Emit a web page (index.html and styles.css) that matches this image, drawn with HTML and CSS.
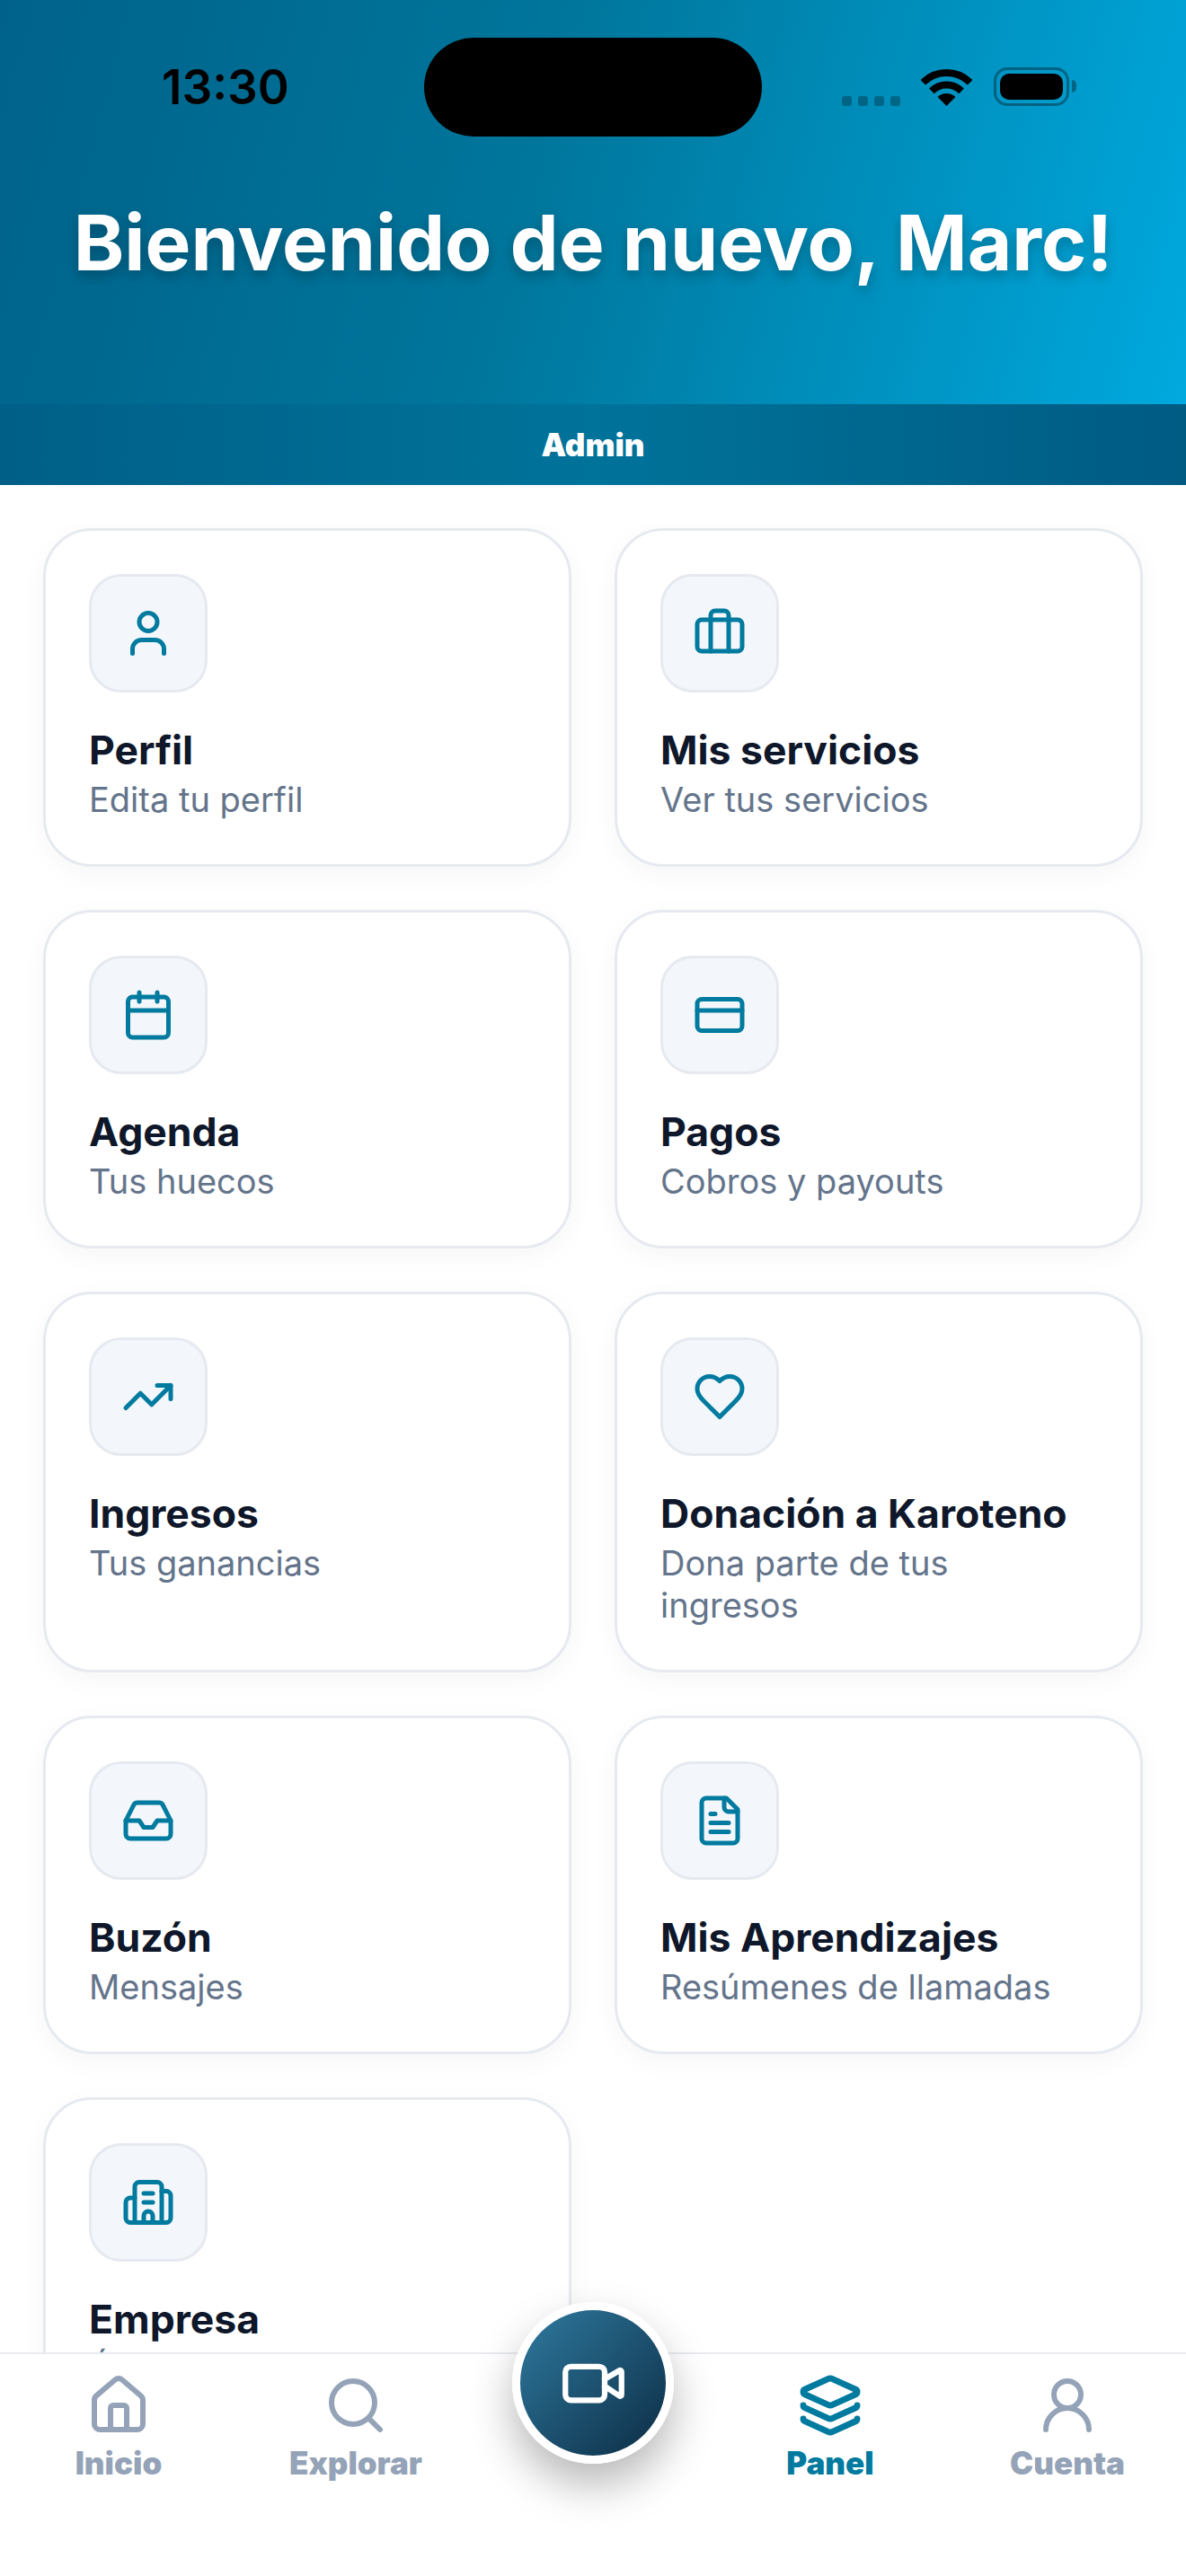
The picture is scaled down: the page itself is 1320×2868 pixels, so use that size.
FILE: index.html
```html
<!DOCTYPE html>
<html lang="es">
<head>
    <meta charset="UTF-8">
    <meta name="viewport" content="width=device-width, initial-scale=1.0">
    <title>Panel</title>
    <link rel="stylesheet" href="styles.css">
</head>
<body>
    <div class="screen">
        <header class="hero">
            <div class="status-bar">
                <span class="time">13:30</span>
                <div class="island"></div>
                <div class="status-icons">
                    <div class="signal"><i></i><i></i><i></i><i></i></div>
                    <svg class="wifi" viewBox="0 0 57 42" width="57" height="42">
                        <path d="M2.3 15.8A37 37 0 0 1 54.7 15.8" fill="none" stroke="#000" stroke-width="8"/>
                        <path d="M11.9 25.4A23.5 23.5 0 0 1 45.1 25.4" fill="none" stroke="#000" stroke-width="8"/>
                        <path d="M28.5 42L18.6 32.1A14 14 0 0 1 38.4 32.1Z" fill="#000"/>
                    </svg>
                    <div class="battery"><div class="battery-fill"></div></div>
                    <div class="battery-cap"></div>
                </div>
            </div>
            <h1>Bienvenido de nuevo, Marc!</h1>
        </header>
        <div class="role-bar">Admin</div>

        <main class="grid">
            <a class="card">
                <div class="card-icon">
                    <svg viewBox="0 0 24 24"><path d="M19 21v-2a4 4 0 0 0-4-4H9a4 4 0 0 0-4 4v2"/><circle cx="12" cy="7" r="4"/></svg>
                </div>
                <h3>Perfil</h3>
                <p>Edita tu perfil</p>
            </a>
            <a class="card">
                <div class="card-icon">
                    <svg viewBox="0 0 24 24"><path d="M16 20V4a2 2 0 0 0-2-2h-4a2 2 0 0 0-2 2v16"/><rect width="20" height="14" x="2" y="6" rx="2"/></svg>
                </div>
                <h3>Mis servicios</h3>
                <p>Ver tus servicios</p>
            </a>
            <a class="card">
                <div class="card-icon">
                    <svg viewBox="0 0 24 24"><path d="M8 2v4"/><path d="M16 2v4"/><rect width="18" height="18" x="3" y="4" rx="2"/><path d="M3 10h18"/></svg>
                </div>
                <h3>Agenda</h3>
                <p>Tus huecos</p>
            </a>
            <a class="card">
                <div class="card-icon">
                    <svg viewBox="0 0 24 24"><rect width="20" height="14" x="2" y="5" rx="2"/><path d="M2 10h20"/></svg>
                </div>
                <h3>Pagos</h3>
                <p>Cobros y payouts</p>
            </a>
            <a class="card">
                <div class="card-icon">
                    <svg viewBox="0 0 24 24"><path d="M16 7h6v6"/><path d="m22 7-8.5 8.5-5-5L2 17"/></svg>
                </div>
                <h3>Ingresos</h3>
                <p>Tus ganancias</p>
            </a>
            <a class="card">
                <div class="card-icon">
                    <svg viewBox="0 0 24 24"><path d="M19 14c1.49-1.46 3-3.21 3-5.5A5.5 5.5 0 0 0 16.5 3c-1.76 0-3 .5-4.5 2-1.5-1.5-2.74-2-4.5-2A5.5 5.5 0 0 0 2 8.5c0 2.3 1.5 4.05 3 5.5l7 7Z"/></svg>
                </div>
                <h3>Donación a Karoteno</h3>
                <p>Dona parte de tus ingresos</p>
            </a>
            <a class="card">
                <div class="card-icon">
                    <svg viewBox="0 0 24 24"><path d="M22 12h-6l-2 3h-4l-2-3H2"/><path d="M5.45 5.11 2 12v6a2 2 0 0 0 2 2h16a2 2 0 0 0 2-2v-6l-3.45-6.89A2 2 0 0 0 16.76 4H7.24a2 2 0 0 0-1.79 1.11z"/></svg>
                </div>
                <h3>Buzón</h3>
                <p>Mensajes</p>
            </a>
            <a class="card">
                <div class="card-icon">
                    <svg viewBox="0 0 24 24"><path d="M15 2H6a2 2 0 0 0-2 2v16a2 2 0 0 0 2 2h12a2 2 0 0 0 2-2V7Z"/><path d="M14 2v4a2 2 0 0 0 2 2h4"/><path d="M10 9H8"/><path d="M16 13H8"/><path d="M16 17H8"/></svg>
                </div>
                <h3>Mis Aprendizajes</h3>
                <p>Resúmenes de llamadas</p>
            </a>
            <a class="card">
                <div class="card-icon">
                    <svg viewBox="0 0 24 24"><path d="M10 12h4"/><path d="M10 8h4"/><path d="M14 21v-3a2 2 0 0 0-4 0v3"/><path d="M6 10H4a2 2 0 0 0-2 2v7a2 2 0 0 0 2 2h16a2 2 0 0 0 2-2V9a2 2 0 0 0-2-2h-2"/><path d="M6 21V5a2 2 0 0 1 2-2h8a2 2 0 0 1 2 2v16"/></svg>
                </div>
                <h3>Empresa</h3>
                <p>Área de empresa</p>
            </a>
        </main>

        <nav class="tab-bar">
            <a class="tab">
                <svg viewBox="0 0 24 24"><path d="M15 21v-8a1 1 0 0 0-1-1h-4a1 1 0 0 0-1 1v8"/><path d="M3 10a2 2 0 0 1 .709-1.528l7-5.999a2 2 0 0 1 2.582 0l7 5.999A2 2 0 0 1 21 10v9a2 2 0 0 1-2 2H5a2 2 0 0 1-2-2z"/></svg>
                <span>Inicio</span>
            </a>
            <a class="tab">
                <svg viewBox="0 0 24 24"><circle cx="11" cy="11" r="8"/><path d="m21 21-4.3-4.3"/></svg>
                <span>Explorar</span>
            </a>
            <div class="tab-spacer"></div>
            <a class="tab active">
                <svg viewBox="0 0 24 24"><path d="M12.83 2.18a2 2 0 0 0-1.66 0L2.6 6.08a1 1 0 0 0 0 1.83l8.58 3.91a2 2 0 0 0 1.66 0l8.58-3.9a1 1 0 0 0 0-1.83z"/><path d="M2 12a1 1 0 0 0 .58.91l8.6 3.91a2 2 0 0 0 1.65 0l8.58-3.9A1 1 0 0 0 22 12"/><path d="M2 17a1 1 0 0 0 .58.91l8.6 3.91a2 2 0 0 0 1.65 0l8.58-3.9A1 1 0 0 0 22 17"/></svg>
                <span>Panel</span>
            </a>
            <a class="tab">
                <svg viewBox="0 0 24 24"><circle cx="12" cy="8" r="5"/><path d="M20 21a8 8 0 0 0-16 0"/></svg>
                <span>Cuenta</span>
            </a>
            <button class="fab">
                <svg viewBox="0 0 24 24"><path d="m16 13 5.223 3.482a.5.5 0 0 0 .777-.416V7.87a.5.5 0 0 0-.752-.432L16 10.5"/><rect x="2" y="6" width="14" height="12" rx="2"/></svg>
            </button>
        </nav>
    </div>
</body>
</html>
```

FILE: styles.css
```css
body {
    margin: 0;
    background: #fff;
    font-family: Inter, "Liberation Sans", sans-serif;
}
svg {
    display: block;
}
.screen {
    width: 1320px;
    height: 2868px;
    display: flex;
    flex-direction: column;
    overflow: hidden;
}

/* header */
.hero {
    height: 450px;
    flex: none;
    box-sizing: border-box;
    padding-top: 42px;
    background: linear-gradient(105deg, #00628a 0%, #00769c 45%, #00a9de 100%);
}
.status-bar {
    position: relative;
    height: 110px;
}
.time {
    position: absolute;
    left: 180px;
    top: 22px;
    font-size: 53px;
    font-weight: 600;
    line-height: 66px;
    color: #000;
}
.island {
    position: absolute;
    left: 472px;
    top: 0;
    width: 376px;
    height: 110px;
    border-radius: 55px;
    background: #000;
}
.status-icons {
    position: absolute;
    left: 937px;
    top: 33px;
    display: flex;
    align-items: flex-end;
}
.signal {
    display: flex;
    gap: 7px;
    margin-right: 23px;
}
.signal i {
    width: 11px;
    height: 11px;
    border-radius: 3px;
    background: rgba(0, 0, 0, 0.28);
}
.wifi {
    margin-right: 24px;
}
.battery {
    width: 84px;
    height: 43px;
    box-sizing: border-box;
    padding: 4px;
    border: 3px solid rgba(0, 0, 0, 0.35);
    border-radius: 15px;
}
.battery-fill {
    height: 100%;
    border-radius: 10px;
    background: #000;
}
.battery-cap {
    width: 5px;
    height: 14px;
    margin: 0 0 15px 3px;
    border-radius: 0 5px 5px 0;
    background: rgba(0, 0, 0, 0.35);
}
h1 {
    margin: 68px 0 0;
    font-size: 85.5px;
    font-weight: 700;
    line-height: 100px;
    text-align: center;
    color: #fff;
    text-shadow: 0 6px 14px rgba(0, 0, 0, 0.25);
}
.role-bar {
    height: 90px;
    flex: none;
    font-size: 35px;
    font-weight: 900;
    line-height: 90px;
    text-align: center;
    color: #fff;
    background: linear-gradient(90deg, #005f87 0%, #00739a 50%, #005b83 100%);
}

/* cards */
.grid {
    flex: 1;
    min-height: 0;
    overflow: hidden;
    box-sizing: border-box;
    padding: 48px;
    display: grid;
    grid-template-columns: 1fr 1fr;
    grid-auto-rows: min-content;
    gap: 48px;
}
.card {
    display: block;
    padding: 48px;
    background: #fff;
    border: 3px solid #e6eaf0;
    border-radius: 54px;
    box-shadow: 0 8px 30px rgba(15, 23, 42, 0.04);
}
.card-icon {
    width: 132px;
    height: 132px;
    box-sizing: border-box;
    display: flex;
    align-items: center;
    justify-content: center;
    background: #f3f7fb;
    border: 3px solid #e6eaf0;
    border-radius: 36px;
    color: #007a9e;
}
.card-icon svg {
    width: 60px;
    height: 60px;
    fill: none;
    stroke: currentColor;
    stroke-width: 2;
    stroke-linecap: round;
    stroke-linejoin: round;
}
.card h3 {
    margin: 34px 0 0;
    font-size: 44.5px;
    font-weight: 700;
    line-height: 60px;
    color: #0f172a;
}
.card p {
    margin: 2px 0 0;
    padding-right: 12px;
    font-size: 38px;
    line-height: 47px;
    color: #64748b;
}

/* bottom tabs */
.tab-bar {
    position: relative;
    height: 249px;
    flex: none;
    box-sizing: border-box;
    padding-top: 21px;
    display: flex;
    background: #fff;
    border-top: 2px solid #e8ebf0;
}
.tab {
    flex: 1;
    display: flex;
    flex-direction: column;
    align-items: center;
    color: #94a3b8;
}
.tab-spacer {
    flex: 1;
}
.tab svg {
    width: 72px;
    height: 72px;
    fill: none;
    stroke: currentColor;
    stroke-width: 2;
    stroke-linecap: round;
    stroke-linejoin: round;
}
.tab span {
    margin-top: 1px;
    font-size: 35px;
    font-weight: 900;
    line-height: 54px;
}
.tab.active {
    color: #007a9e;
}
.tab.active svg {
    stroke-width: 2.3;
}
.fab {
    position: absolute;
    left: 570px;
    top: -58px;
    width: 180px;
    height: 180px;
    padding: 0;
    display: flex;
    align-items: center;
    justify-content: center;
    border: 9px solid #fff;
    border-radius: 50%;
    background: linear-gradient(135deg, #2f7a9f 0%, #0c2c44 100%);
    box-shadow: 0 24px 48px rgba(0, 0, 0, 0.28);
}
.fab svg {
    width: 75px;
    height: 75px;
    fill: none;
    stroke: #fff;
    stroke-width: 2;
    stroke-linecap: round;
    stroke-linejoin: round;
}
```
